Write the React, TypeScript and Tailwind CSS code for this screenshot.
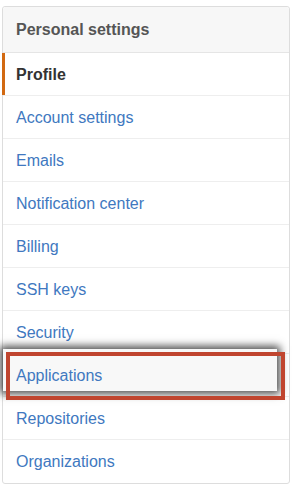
const items = [
  "Account settings",
  "Emails",
  "Notification center",
  "Billing",
  "SSH keys",
  "Security",
  "Applications",
  "Repositories",
  "Organizations",
];

export default function App() {
  return (
    <div className="w-[292px] h-[487px] bg-white pt-[6px] pl-[2px] font-['Liberation_Sans',Arial,sans-serif] text-[16px]">
      <div className="w-[288px] border border-[#ddd] rounded-[3px]">
        <div className="h-[46px] flex items-center px-[13px] pt-[1px] bg-[#f7f7f7] border-b border-[#e5e5e5] font-bold text-[#555] rounded-t-[3px]">
          Personal settings
        </div>
        <div className="relative h-[43px] flex items-center px-[13px] pt-[1px] border-b border-[#eee] font-bold text-[#333]">
          <span className="absolute left-[-1px] top-0 h-[42px] w-[3px] bg-[#d26911]" />
          Profile
        </div>
        {items.map((label, i) => {
          const last = i === items.length - 1;
          if (label === "Applications") {
            return (
              <div key={label} className="relative h-[43px] flex items-center px-[13px] pt-[1px] border-b border-[#eee] text-[#4078c0]">
                <span className="absolute left-0 top-[-5px] w-[274px] h-[42px] bg-[#f8f8f8] shadow-[0_0_8px_3px_rgba(0,0,0,0.7)]" />
                <span className="absolute left-[3px] top-[-2px] w-[279px] h-[48px] border-[4px] border-[#c0452f]" />
                <span className="relative">{label}</span>
              </div>
            );
          }
          return (
            <div
              key={label}
              className={`h-[43px] flex items-center px-[13px] pt-[1px] text-[#4078c0] ${last ? "h-[42px]" : "border-b border-[#eee]"}`}
            >
              {label}
            </div>
          );
        })}
      </div>
    </div>
  );
}
